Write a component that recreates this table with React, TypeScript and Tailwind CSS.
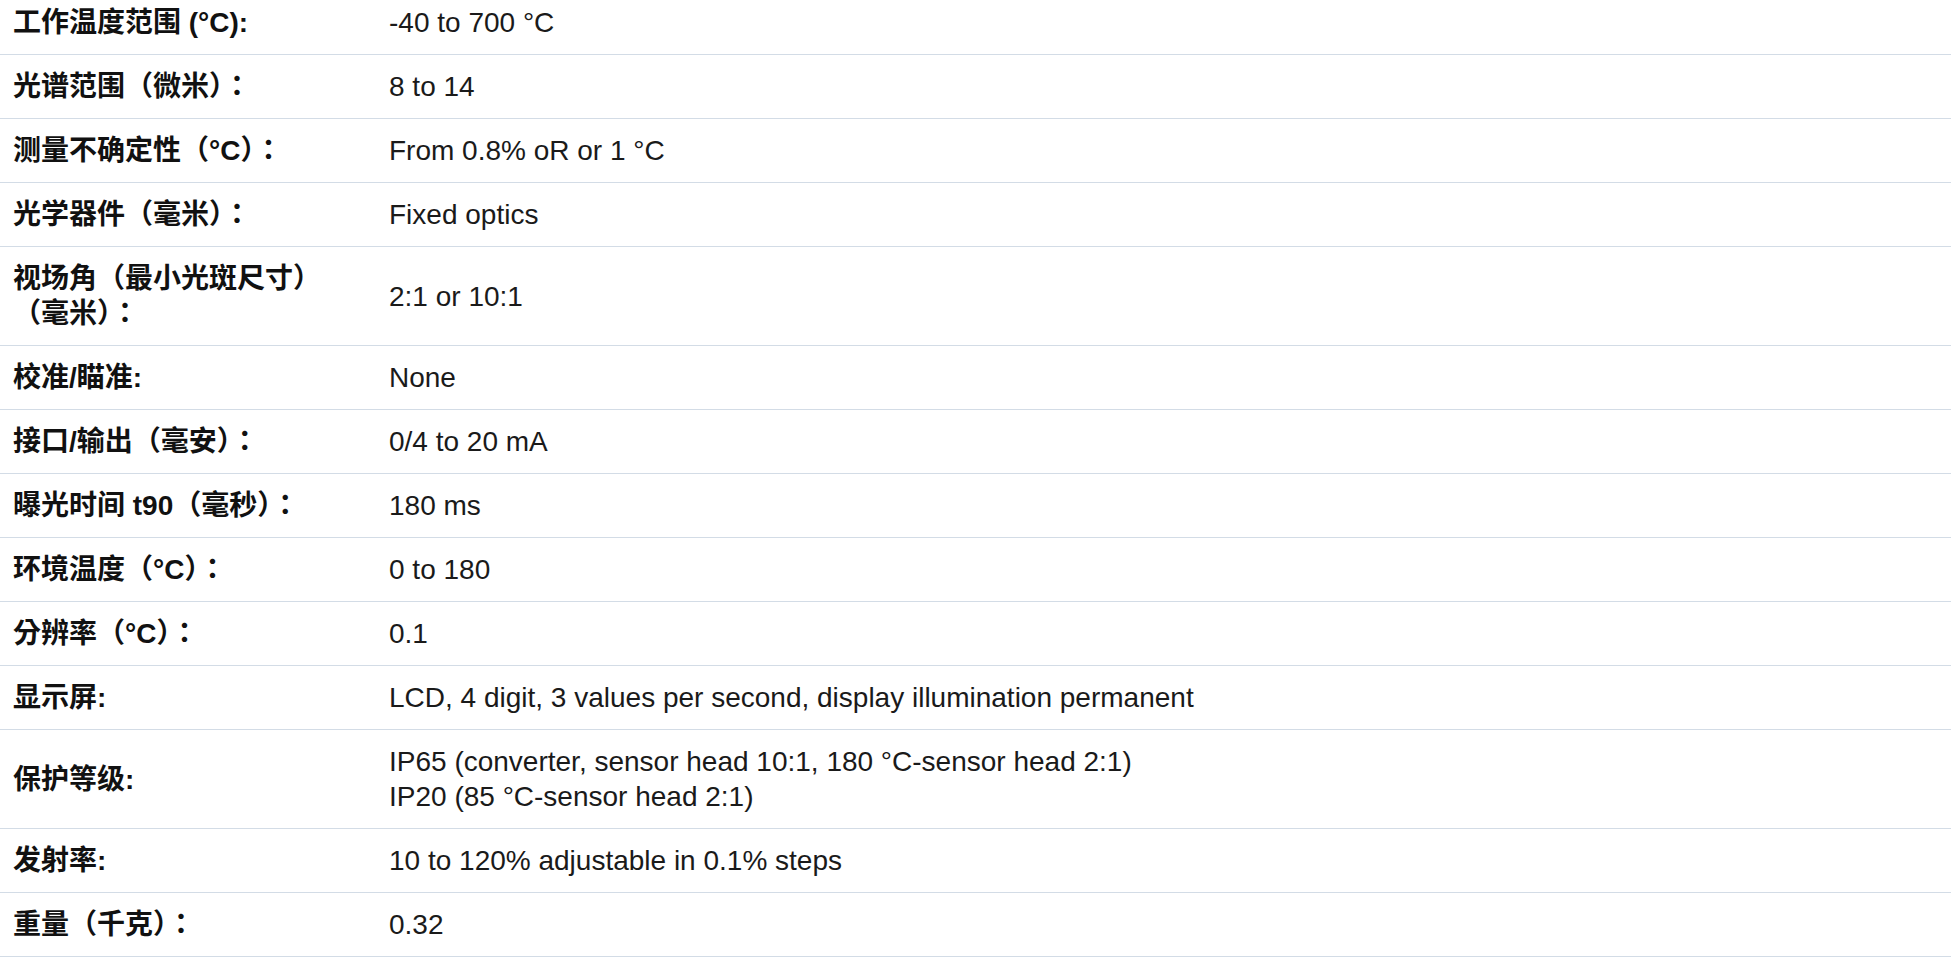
import React from 'react';

type Spec = {
    label: React.ReactNode;
    value: React.ReactNode;
};

const specs: Spec[] = [
    { label: '工作温度范围 (°C):', value: '-40 to 700 °C' },
    { label: '光谱范围（微米）：', value: '8 to 14' },
    { label: '测量不确定性（°C）：', value: 'From 0.8% oR or 1 °C' },
    { label: '光学器件（毫米）：', value: 'Fixed optics' },
    {
        label: (
            <>
                视场角（最小光斑尺寸）
                <br />
                （毫米）：
            </>
        ),
        value: '2:1 or 10:1',
    },
    { label: '校准/瞄准:', value: 'None' },
    { label: '接口/输出（毫安）：', value: '0/4 to 20 mA' },
    { label: '曝光时间 t90（毫秒）：', value: '180 ms' },
    { label: '环境温度（°C）：', value: '0 to 180' },
    { label: '分辨率（°C）：', value: '0.1' },
    { label: '显示屏:', value: 'LCD, 4 digit, 3 values per second, display illumination permanent' },
    {
        label: '保护等级:',
        value: (
            <>
                IP65 (converter, sensor head 10:1, 180 °C-sensor head 2:1)
                <br />
                IP20 (85 °C-sensor head 2:1)
            </>
        ),
    },
    { label: '发射率:', value: '10 to 120% adjustable in 0.1% steps' },
    { label: '重量（千克）：', value: '0.32' },
];

const App: React.FC = () => {
    return (
        <div className="min-h-screen bg-white overflow-hidden font-['Liberation_Sans','Noto_Sans_CJK_TC',sans-serif]">
            {/* page is scrolled slightly, first row sits under the top edge */}
            <div className="-mt-[9px]">
                {specs.map((row, i) => (
                    <div
                        key={i}
                        className="grid grid-cols-[377px_1fr] items-center border-b border-[#d3dce6] text-[28px] leading-[35px]"
                    >
                        <div className="pl-[13px] pr-3 py-[14px] font-bold text-[#111111]">{row.label}</div>
                        <div className="pl-3 pr-3 py-[14px] text-[#1a1a1a]">{row.value}</div>
                    </div>
                ))}
            </div>
        </div>
    );
};

export default App;
